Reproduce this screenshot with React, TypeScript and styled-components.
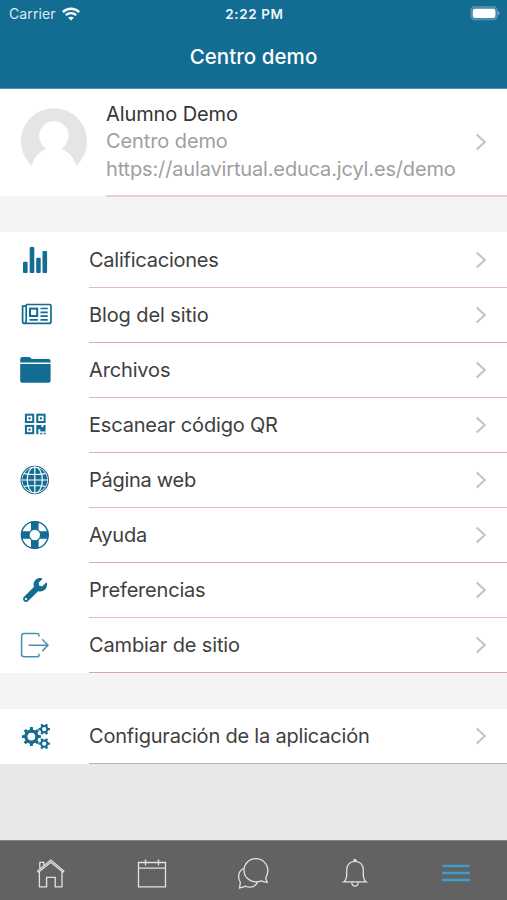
import React from "react";
import styled, { createGlobalStyle } from "styled-components";
import { FaWrench } from "react-icons/fa";

const BLUE = "#136c92";

const GlobalStyle = createGlobalStyle`
  * { box-sizing: border-box; }
  body { margin: 0; background: #e8e8e8; }
`;

const Screen = styled.div`
  width: 507px;
  height: 900px;
  display: flex;
  flex-direction: column;
  overflow: hidden;
  background: #e8e8e8;
  color: #3e3e3e;
  font-family: Inter, "Liberation Sans", sans-serif;
`;

const Header = styled.header`
  height: 89px;
  flex: none;
  background: ${BLUE};
  border-bottom: 1px solid #4f8fac;
  color: #fff;
`;

const StatusBar = styled.div`
  height: 27px;
  padding: 0 7px 0 9px;
  display: grid;
  grid-template-columns: 1fr auto 1fr;
  align-items: center;
`;

const Carrier = styled.div`
  display: flex;
  align-items: center;
  gap: 6px;
  font-size: 14px;
  letter-spacing: 0.12px;
  color: #dcebf2;
`;

const Clock = styled.div`
  font-size: 13.5px;
  font-weight: 600;
  letter-spacing: 0.6px;
  color: #eef6fa;
`;

const Battery = styled.div`
  display: flex;
  justify-content: flex-end;
`;

const Title = styled.h1`
  margin: 0;
  height: 60px;
  line-height: 60px;
  text-align: center;
  font-size: 20.5px;
  font-weight: 550;
  letter-spacing: 0.05px;
`;

const Profile = styled.section`
  flex: none;
  height: 108px;
  padding-left: 20px;
  display: flex;
  background: linear-gradient(#fff 107px, #f4f4f4 107px);
`;

const Avatar = styled.div`
  width: 86px;
  padding-top: 19px;
`;

const ProfileBody = styled.div`
  flex: 1;
  padding-right: 20px;
  display: flex;
  align-items: center;
  justify-content: space-between;
  border-bottom: 2px solid #eccdd3;
`;

const ProfileText = styled.div`
  display: flex;
  flex-direction: column;
`;

const Line = styled.div<{ $muted?: boolean; $spacing: number }>`
  height: 27.5px;
  line-height: 27.5px;
  font-size: 20px;
  white-space: nowrap;
  color: ${(p) => (p.$muted ? "#a0a0a0" : "#353535")};
  letter-spacing: ${(p) => p.$spacing}px;
`;

const Gap = styled.div<{ $height: number }>`
  flex: none;
  height: ${(p) => p.$height}px;
  background: #f4f4f4;
`;

const List = styled.ul<{ $top?: number }>`
  flex: none;
  margin: 0;
  padding: ${(p) => p.$top ?? 0}px 0 0;
  list-style: none;
  background: #fff;
`;

const Row = styled.li`
  height: 55px;
  display: flex;
`;

const IconCell = styled.div`
  width: 89px;
  padding: 0 0 1px 15px;
  display: flex;
  align-items: center;
  color: ${BLUE};
`;

const IconBox = styled.div`
  width: 40px;
  height: 40px;
  display: flex;
  align-items: center;
  justify-content: center;
`;

const RowBody = styled.div<{ $line: string }>`
  flex: 1;
  padding-right: 20px;
  display: flex;
  align-items: center;
  justify-content: space-between;
  border-bottom: 1px solid ${(p) => p.$line};
`;

const Label = styled.span<{ $spacing: number }>`
  font-size: 20px;
  white-space: nowrap;
  letter-spacing: ${(p) => p.$spacing}px;
`;

const TabBar = styled.nav`
  flex: none;
  height: 60px;
  margin-top: auto;
  display: grid;
  grid-template-columns: repeat(5, 1fr);
  background: #626262;
  border-top: 1px solid #858585;
`;

const Tab = styled.div<{ $active?: boolean }>`
  display: flex;
  align-items: center;
  justify-content: center;
  padding-top: 4px;
  color: ${(p) => (p.$active ? "#3c9fcb" : "#e2e2e2")};
`;

const Chevron = () => (
  <svg width="12" height="18" viewBox="0 0 12 18" fill="none" stroke="#c4c4c4" strokeWidth="2.1">
    <path d="M1.7 1.4 9.8 9 1.7 16.6" />
  </svg>
);

const Wifi = () => (
  <svg width="18" height="14" viewBox="0 0 18 14" fill="none" stroke="#fff" strokeWidth="2.4">
    <path d="M.8 5.1C5.4.6 12.6.6 17.2 5.1" />
    <path d="M3.8 8.2c3-2.8 7.4-2.8 10.4 0" />
    <path d="M9 13.6 6.2 10.8c1.6-1.5 4-1.5 5.6 0z" fill="#fff" stroke="none" />
  </svg>
);

const BatteryIcon = () => (
  <svg width="30" height="15" viewBox="0 0 30 15">
    <rect x="1" y=".9" width="26.2" height="12.8" rx="3.6" fill="#3f86a6" stroke="#5c99b4" strokeWidth="1.1" />
    <rect x="2.8" y="2.7" width="22.6" height="9.2" rx="2" fill="#fff" />
    <path d="M28 5.1c2 .7 2 3.7 0 4.4z" fill="#78abc2" />
  </svg>
);

const AvatarIcon = () => (
  <svg width="68" height="60" viewBox="0 0 68 60">
    <path
      d="M11.7 57.7A33.1 33.1 0 1 1 56.3 57.7C53.2 48.5 48.6 43.4 41.2 41 45.8 37.8 48.6 33 48.6 27.8a14.7 14.7 0 0 0-29.4 0c0 5.2 2.8 10 7.4 13.2-7.2 2.4-12.3 7.7-14.9 16.7z"
      fill="#e5e5e5"
    />
  </svg>
);

const Bars = () => (
  <svg width="40" height="40" viewBox="0 0 40 40" fill="currentColor">
    <rect x="8" y="21.8" width="4.6" height="11.3" rx="1" />
    <rect x="14.7" y="7" width="4.6" height="26.1" rx="1" />
    <rect x="21.2" y="17.8" width="4.5" height="15.3" rx="1" />
    <rect x="27.5" y="11" width="4.6" height="22.1" rx="1" />
  </svg>
);

const Newspaper = () => (
  <svg width="40" height="40" viewBox="0 0 40 40" fill="none" stroke="currentColor" strokeWidth="1.7">
    <path d="M11.2 9.5h23.5q1.3 0 1.3 1.3v15.6q0 2-2 2H9.8q-2.2 0-2.2-2V11.1h3.6v14.5q0 2.5-1.6 2.8M11.2 11.2V9.5" />
    <rect x="15" y="13.6" width="7.2" height="7.4" strokeWidth="2" />
    <path d="M25.5 13.5h7.3M25.5 17.3h7.3M25.5 21.1h7.3M14.5 24.9h8.4M25.5 24.9h7.3" />
  </svg>
);

const Folder = () => (
  <svg width="40" height="40" viewBox="0 0 40 40" fill="currentColor">
    <path d="M5.2 12.6V9q0-2 2-2h6.7c1.7 0 1.8 2 3.7 2h16q2 0 2 2v1.6z" />
    <path d="M5.2 14.1h30.4v16.7q0 2-2 2H7.2q-2 0-2-2z" />
  </svg>
);

const QrCode = () => (
  <svg width="40" height="40" viewBox="0 0 40 40" fill="none" stroke="currentColor" strokeWidth="2">
    <rect x="10.9" y="9.7" width="7.3" height="7.3" />
    <rect x="22.3" y="9.7" width="7.3" height="7.3" />
    <rect x="10.9" y="20.9" width="7.3" height="7.3" />
    <g fill="currentColor" stroke="none">
      <rect x="13.5" y="12.3" width="2.1" height="2.1" />
      <rect x="24.9" y="12.3" width="2.1" height="2.1" />
      <rect x="13.5" y="23.5" width="2.1" height="2.1" />
      <path d="M21.3 19.9h5.1v2.2h2v-2.2h2.2v6.5h-5.3v-2.2h-2v5h-2zM25.3 27.7h1.9v1.5h-1.9zM28.6 27.7h2v1.5h-2z" />
    </g>
  </svg>
);

const Globe = () => (
  <svg width="40" height="40" viewBox="0 0 40 40" fill="none">
    <circle cx="19.8" cy="20" r="13.7" stroke="currentColor" strokeWidth="1.1" />
    <circle cx="19.8" cy="20" r="12.5" fill="currentColor" />
    <g stroke="#fff" strokeWidth="1.2">
      <path d="M19.8 7.2v25.6M7 20h25.6M9.2 13.6q10.6 1.8 21.2 0M9.2 26.4q10.6-1.8 21.2 0" />
      <ellipse cx="19.8" cy="20" rx="7.6" ry="13" />
    </g>
  </svg>
);

const LifeRing = () => (
  <svg width="40" height="40" viewBox="0 0 40 40" fill="none" stroke="currentColor">
    <path
      d="M16 6.7q3.8-1.2 7.6 0V15q-3.8-1.6-7.6 0zM16 33.3q3.8 1.2 7.6 0V25q-3.8 1.6-7.6 0zM6.5 16.2q-1.2 3.8 0 7.6h8.3q-1.6-3.8 0-7.6zM33.1 16.2q1.2 3.8 0 7.6h-8.3q1.6-3.8 0-7.6z"
      fill="currentColor"
      stroke="none"
    />
    <circle cx="19.8" cy="20" r="13.4" strokeWidth="1.4" />
    <circle cx="19.8" cy="20" r="5.8" strokeWidth="1.2" />
  </svg>
);

const Exit = () => (
  <svg width="40" height="40" viewBox="0 0 40 40" fill="none" stroke="#4b8fb0" strokeWidth="1.5">
    <path d="M24 11.6v-1.1q0-1.9-1.9-1.9H9.1q-2.5 0-2.5 2.5v18.2q0 2.5 2.5 2.5h13q1.9 0 1.9-1.9v-1.1M13.7 20.2h19.1M27.2 14.3l5.8 5.9-5.8 5.9" />
  </svg>
);

const gearPath = (cx: number, cy: number, outer: number, inner: number, hole: number, teeth: number) => {
  const step = (Math.PI * 2) / teeth;
  const at = (radius: number, angle: number) =>
    `${(cx + radius * Math.cos(angle)).toFixed(2)} ${(cy + radius * Math.sin(angle)).toFixed(2)}`;
  const points: string[] = [];
  for (let i = 0; i < teeth; i += 1) {
    const a = i * step;
    points.push(at(inner, a - step * 0.27), at(outer, a - step * 0.19), at(outer, a + step * 0.19), at(inner, a + step * 0.27));
  }
  return `M${points.join("L")}ZM${cx - hole} ${cy}a${hole} ${hole} 0 1 0 ${hole * 2} 0a${hole} ${hole} 0 1 0 ${-hole * 2} 0Z`;
};

const Gears = () => (
  <svg width="40" height="40" viewBox="0 0 40 40" fill="currentColor" fillRule="evenodd">
    <path d={gearPath(16.4, 20.6, 9.6, 7.2, 3.9, 8)} />
    <path d={gearPath(29.2, 13.2, 5.8, 4.2, 2.1, 6)} />
    <path d={gearPath(29.2, 27.7, 5.8, 4.2, 2.1, 6)} />
  </svg>
);

const Home = () => (
  <svg width="30" height="32" viewBox="0 0 30 32" fill="none" stroke="currentColor" strokeWidth="1.3">
    <path d="m1.7 14 13.1-11 13.1 11-1 1.2-12.1-9.9L2.7 15.2z" />
    <path d="M3.4 14.8v15h7.2V20.4h8.6v9.4H26v-15M3.8 11.6V5.3h4v2.9" />
  </svg>
);

const Calendar = () => (
  <svg width="30" height="32" viewBox="0 0 30 32" fill="none" stroke="currentColor" strokeWidth="1.3">
    <path d="M1.5 5.5h27v24.3h-27zM1.5 11.2h27M8.5 2.5v6M21.5 2.5v6" />
  </svg>
);

const Chats = () => (
  <svg width="32" height="32" viewBox="0 0 32 32" fill="none" stroke="currentColor" strokeWidth="1.3">
    <path d="M30.2 25.3c-2.7-.5-5-1-6.2-1.5-1.5.8-3.1 1.1-4.7 1.1C12.2 24.9 7 19.8 7 13.2 7 6.6 12.3 1.7 18.9 1.7s11.9 5.2 11.9 11.8c0 3.1-.8 5.4-2.2 7.5z" />
    <path d="M6.6 11.3C3.2 13.4 1.4 17 1.7 20.5c.1 1.7.7 3.3 1.7 4.8L2.5 31c2.4-.6 4.4-1 6.2-1.8 1.5.8 3 1.1 4.6 1 3.1-.1 5.7-1.8 7.4-5.3" />
  </svg>
);

const Bell = () => (
  <svg width="26" height="32" viewBox="0 0 26 32" fill="none" stroke="currentColor" strokeWidth="1.3">
    <path d="M13 4.3c-5.5 0-8.3 3.8-8.3 9v4.6c0 3.5-.6 5.2-3 7h22.6c-2.4-1.8-3-3.5-3-7v-4.6c0-5.2-2.8-9-8.3-9z" />
    <path d="M9.8 25.2c.1 5.1 6.3 5.1 6.4 0" />
    <circle cx="13" cy="3.5" r="1" fill="currentColor" />
  </svg>
);

const Menu = () => (
  <svg width="30" height="32" viewBox="0 0 30 32" fill="none" stroke="currentColor" strokeWidth="2.6" strokeLinecap="round">
    <path d="M2.3 9h25.4M2.3 16h25.4M2.3 23h25.4" />
  </svg>
);

const items = [
  { label: "Calificaciones", icon: <Bars />, spacing: -0.24, line: "#edb7bd" },
  { label: "Blog del sitio", icon: <Newspaper />, spacing: -0.1, line: "#e9a6ac" },
  { label: "Archivos", icon: <Folder />, spacing: -0.15, line: "#e5b7be" },
  { label: "Escanear código QR", icon: <QrCode />, spacing: -0.18, line: "#e7a9af" },
  { label: "Página web", icon: <Globe />, spacing: -0.28, line: "#edb5ba" },
  { label: "Ayuda", icon: <LifeRing />, spacing: -0.2, line: "#e2aab2" },
  { label: "Preferencias", icon: <FaWrench size={24} />, spacing: -0.2, line: "#edb7bd" },
  { label: "Cambiar de sitio", icon: <Exit />, spacing: -0.14, line: "#d9a3af" },
];

export default function App() {
  return (
    <>
      <GlobalStyle />
      <Screen>
        <Header>
          <StatusBar>
            <Carrier>Carrier <Wifi /></Carrier>
            <Clock>2:22 PM</Clock>
            <Battery><BatteryIcon /></Battery>
          </StatusBar>
          <Title>Centro demo</Title>
        </Header>
        <Profile>
          <Avatar><AvatarIcon /></Avatar>
          <ProfileBody>
            <ProfileText>
              <Line $spacing={-0.1}>Alumno Demo</Line>
              <Line $muted $spacing={-0.1}>Centro demo</Line>
              <Line $muted $spacing={-0.15}>https://aulavirtual.educa.jcyl.es/demo</Line>
            </ProfileText>
            <Chevron />
          </ProfileBody>
        </Profile>
        <Gap $height={35} />
        <List $top={1}>
          {items.map((item) => (
            <Row key={item.label}>
              <IconCell><IconBox>{item.icon}</IconBox></IconCell>
              <RowBody $line={item.line}>
                <Label $spacing={item.spacing}>{item.label}</Label>
                <Chevron />
              </RowBody>
            </Row>
          ))}
        </List>
        <Gap $height={36} />
        <List>
          <Row>
            <IconCell><IconBox><Gears /></IconBox></IconCell>
            <RowBody $line="#c9a9af">
              <Label $spacing={-0.2}>Configuración de la aplicación</Label>
              <Chevron />
            </RowBody>
          </Row>
        </List>
        <TabBar>
          <Tab><Home /></Tab>
          <Tab><Calendar /></Tab>
          <Tab><Chats /></Tab>
          <Tab><Bell /></Tab>
          <Tab $active><Menu /></Tab>
        </TabBar>
      </Screen>
    </>
  );
}
